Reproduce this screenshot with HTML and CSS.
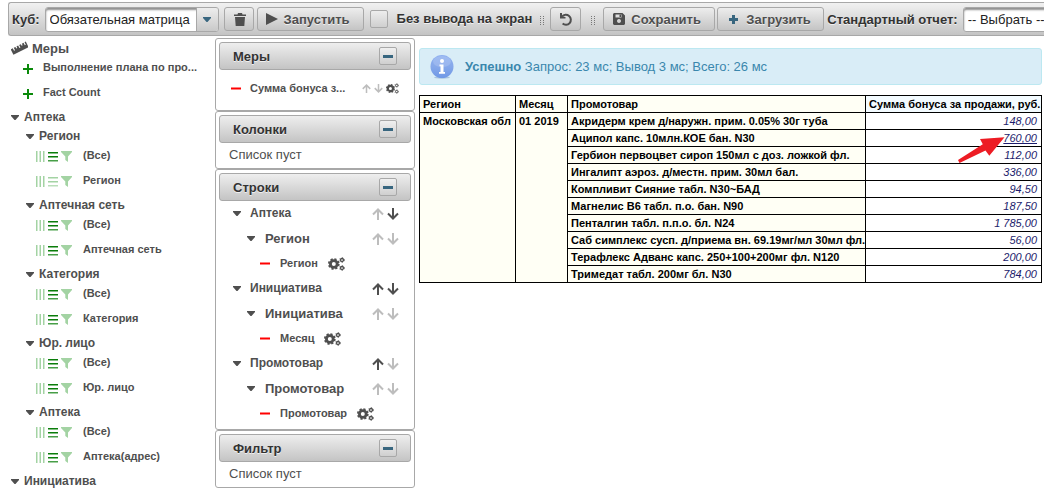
FILE: index.html
```html
<!DOCTYPE html>
<html lang="ru">
<head>
<meta charset="utf-8">
<title>Обязательная матрица</title>
<link rel="stylesheet" href="styles.css">
</head>
<body>
<svg class="sprite" aria-hidden="true">
  <symbol id="caret" viewBox="0 0 8 5"><path d="M0 0h8v1L4.500 5h-1L0 1z"/></symbol>
  <symbol id="cols" viewBox="0 0 9 11"><path d="M0 0h1.500v11H0zM3.500 0H5v11H3.500zM7 0h1.500v11H7z"/></symbol>
  <symbol id="rows" viewBox="0 0 10 10"><path d="M0 0h10v1.500H0zM0 4h10v1.500H0z"/><path opacity=".75" d="M0 8h10v1.500H0z"/></symbol>
  <symbol id="filter" viewBox="0 0 11 11"><path d="M0 0h11v1L7 5.500V11L4.300 9V5.500L0 1z"/></symbol>
  <symbol id="plus" viewBox="0 0 10 10"><path d="M4 0h2v4h4v2H6v4H4V6H0V4h4z"/></symbol>
  <symbol id="minus" viewBox="0 0 10 3"><path d="M0 .5h10v2H0z"/></symbol>
  <symbol id="up" viewBox="0 0 12 12"><path d="M6 12V2M1 6.500L6 1.500L11 6.500" fill="none" stroke="currentColor" stroke-width="2"/></symbol>
  <symbol id="down" viewBox="0 0 12 12"><path d="M6 0v10M1 5.500L6 10.500L11 5.500" fill="none" stroke="currentColor" stroke-width="2"/></symbol>
  <symbol id="cogs" viewBox="0 0 17 14">
    <g fill="none" stroke="currentColor">
      <circle cx="5.800" cy="7" r="3.400" stroke-width="2.800"/>
      <circle cx="5.800" cy="7" r="5" stroke-width="1.700" stroke-dasharray="2.200 1.727"/>
      <circle cx="14" cy="3" r="1.500" stroke-width="1.300"/>
      <circle cx="14" cy="3" r="2.400" stroke-width=".8" stroke-dasharray="1.200 1.313"/>
      <circle cx="14" cy="11" r="1.500" stroke-width="1.300"/>
      <circle cx="14" cy="11" r="2.400" stroke-width=".8" stroke-dasharray="1.200 1.313"/>
    </g>
  </symbol>
</svg>

<header class="toolbar">
  <label class="toolbar-label" for="cube">Куб:</label>
  <span class="select">
    <select id="cube"><option>Обязательная матрица</option></select>
    <span class="select-trigger"><svg class="i-caret"><use href="#caret"/></svg></span>
  </span>
  <button class="btn btn-trash" aria-label="Удалить">
    <svg width="12" height="13" viewBox="0 0 12 13"><path d="M0 1.500h3.500L4 0h4l.5 1.500H12V3H0zM1 4h10l-.7 9H1.700z"/></svg>
  </button>
  <button class="btn btn-run">
    <svg width="12" height="12" viewBox="0 0 12 12"><path d="M0 0L12 6L0 12z"/></svg>Запустить
  </button>
  <input class="check" type="checkbox" id="silent">
  <label class="toolbar-label check-label" for="silent">Без вывода на экран</label>
  <span class="grip"></span>
  <button class="btn btn-undo" aria-label="Отменить">
    <svg width="14" height="13" viewBox="0 0 14 13"><path d="M3 3.600A5 5 0 1 1 3.600 10.600" fill="none" stroke="currentColor" stroke-width="2"/><path d="M1 0v5.500h5.500V4L3 3.500V0z"/></svg>
  </button>
  <span class="grip"></span>
  <button class="btn btn-save">
    <svg width="12" height="12" viewBox="0 0 12 12"><path fill-rule="evenodd" d="M1 0h8.500L12 2.500V11l-1 1H1l-1-1V1zM2.500 1.500v3h6v-3zM6 6a2 2 0 1 0 .01 0z"/><path d="M6.500 1.500h1.500v2.500H6.500z"/></svg>Сохранить
  </button>
  <button class="btn btn-load">
    <svg class="blue" width="9" height="9" viewBox="0 0 9 9"><path d="M3 0h3v3h3v3H6v3H3V6H0V3h3z"/></svg>Загрузить
  </button>
  <label class="toolbar-label" for="report">Стандартный отчет:</label>
  <span class="select select-report">
    <select id="report"><option>-- Выбрать --</option></select>
    <span class="select-trigger"><svg class="i-caret"><use href="#caret"/></svg></span>
  </span>
</header>

<main class="layout">
  <nav class="tree" aria-label="Поля куба">
    <div class="tree-title">
      <svg width="17" height="14" viewBox="0 0 18 14"><g transform="rotate(-27 9 7)"><path d="M0 4h2.500v3h1.200V4h2v2h1.200V4h2v3h1.200V4h2v2h1.200V4h2v3h1.200V4H18v6.500H0z"/></g></svg>Меры
    </div>
    <div class="leaf measure"><button class="ico add" aria-label="Добавить"><svg class="i-plus"><use href="#plus"/></svg></button><span>Выполнение плана по про...</span></div>
    <div class="leaf measure"><button class="ico add" aria-label="Добавить"><svg class="i-plus"><use href="#plus"/></svg></button><span>Fact Count</span></div>

    <div class="node"><button class="ico" aria-label="Свернуть"><svg class="i-caret"><use href="#caret"/></svg></button>Аптека</div>
    <div class="branch">
      <div class="node"><button class="ico" aria-label="Свернуть"><svg class="i-caret"><use href="#caret"/></svg></button>Регион</div>
      <div class="leaf"><span class="axes"><button class="ico" aria-label="В колонки"><svg class="i-cols"><use href="#cols"/></svg></button><button class="ico on" aria-label="В строки"><svg class="i-rows"><use href="#rows"/></svg></button><button class="ico" aria-label="В фильтр"><svg class="i-filter"><use href="#filter"/></svg></button></span>(Все)</div>
      <div class="leaf"><span class="axes"><button class="ico" aria-label="В колонки"><svg class="i-cols"><use href="#cols"/></svg></button><button class="ico" aria-label="В строки"><svg class="i-rows"><use href="#rows"/></svg></button><button class="ico" aria-label="В фильтр"><svg class="i-filter"><use href="#filter"/></svg></button></span>Регион</div>

      <div class="node"><button class="ico" aria-label="Свернуть"><svg class="i-caret"><use href="#caret"/></svg></button>Аптечная сеть</div>
      <div class="leaf"><span class="axes"><button class="ico" aria-label="В колонки"><svg class="i-cols"><use href="#cols"/></svg></button><button class="ico on" aria-label="В строки"><svg class="i-rows"><use href="#rows"/></svg></button><button class="ico" aria-label="В фильтр"><svg class="i-filter"><use href="#filter"/></svg></button></span>(Все)</div>
      <div class="leaf"><span class="axes"><button class="ico" aria-label="В колонки"><svg class="i-cols"><use href="#cols"/></svg></button><button class="ico on" aria-label="В строки"><svg class="i-rows"><use href="#rows"/></svg></button><button class="ico" aria-label="В фильтр"><svg class="i-filter"><use href="#filter"/></svg></button></span>Аптечная сеть</div>

      <div class="node"><button class="ico" aria-label="Свернуть"><svg class="i-caret"><use href="#caret"/></svg></button>Категория</div>
      <div class="leaf"><span class="axes"><button class="ico" aria-label="В колонки"><svg class="i-cols"><use href="#cols"/></svg></button><button class="ico on" aria-label="В строки"><svg class="i-rows"><use href="#rows"/></svg></button><button class="ico" aria-label="В фильтр"><svg class="i-filter"><use href="#filter"/></svg></button></span>(Все)</div>
      <div class="leaf"><span class="axes"><button class="ico" aria-label="В колонки"><svg class="i-cols"><use href="#cols"/></svg></button><button class="ico on" aria-label="В строки"><svg class="i-rows"><use href="#rows"/></svg></button><button class="ico" aria-label="В фильтр"><svg class="i-filter"><use href="#filter"/></svg></button></span>Категория</div>

      <div class="node"><button class="ico" aria-label="Свернуть"><svg class="i-caret"><use href="#caret"/></svg></button>Юр. лицо</div>
      <div class="leaf"><span class="axes"><button class="ico" aria-label="В колонки"><svg class="i-cols"><use href="#cols"/></svg></button><button class="ico on" aria-label="В строки"><svg class="i-rows"><use href="#rows"/></svg></button><button class="ico" aria-label="В фильтр"><svg class="i-filter"><use href="#filter"/></svg></button></span>(Все)</div>
      <div class="leaf"><span class="axes"><button class="ico" aria-label="В колонки"><svg class="i-cols"><use href="#cols"/></svg></button><button class="ico on" aria-label="В строки"><svg class="i-rows"><use href="#rows"/></svg></button><button class="ico" aria-label="В фильтр"><svg class="i-filter"><use href="#filter"/></svg></button></span>Юр. лицо</div>

      <div class="node"><button class="ico" aria-label="Свернуть"><svg class="i-caret"><use href="#caret"/></svg></button>Аптека</div>
      <div class="leaf"><span class="axes"><button class="ico" aria-label="В колонки"><svg class="i-cols"><use href="#cols"/></svg></button><button class="ico on" aria-label="В строки"><svg class="i-rows"><use href="#rows"/></svg></button><button class="ico" aria-label="В фильтр"><svg class="i-filter"><use href="#filter"/></svg></button></span>(Все)</div>
      <div class="leaf"><span class="axes"><button class="ico" aria-label="В колонки"><svg class="i-cols"><use href="#cols"/></svg></button><button class="ico on" aria-label="В строки"><svg class="i-rows"><use href="#rows"/></svg></button><button class="ico" aria-label="В фильтр"><svg class="i-filter"><use href="#filter"/></svg></button></span>Аптека(адрес)</div>
    </div>
    <div class="node"><button class="ico" aria-label="Свернуть"><svg class="i-caret"><use href="#caret"/></svg></button>Инициатива</div>
  </nav>

  <div class="panels">
    <section class="panel">
      <h2 class="panel-head">Меры<button class="toggle" aria-label="Свернуть"></button></h2>
      <div class="item item-measure"><button class="ico del" aria-label="Убрать"><svg class="i-minus"><use href="#minus"/></svg></button><span class="item-text">Сумма бонуса з...</span>
        <span class="tools"><button class="ico off" aria-label="Выше"><svg class="i-arrow"><use href="#up"/></svg></button><button class="ico off" aria-label="Ниже"><svg class="i-arrow"><use href="#down"/></svg></button><button class="ico" aria-label="Настроить"><svg class="i-cogs"><use href="#cogs"/></svg></button></span></div>
    </section>

    <section class="panel">
      <h2 class="panel-head">Колонки<button class="toggle" aria-label="Свернуть"></button></h2>
      <p class="empty">Список пуст</p>
    </section>

    <section class="panel">
      <h2 class="panel-head">Строки<button class="toggle" aria-label="Свернуть"></button></h2>
      <div class="item item-dim"><button class="ico" aria-label="Свернуть"><svg class="i-caret"><use href="#caret"/></svg></button>Аптека
        <span class="tools"><button class="ico off" aria-label="Выше"><svg class="i-arrow"><use href="#up"/></svg></button><button class="ico" aria-label="Ниже"><svg class="i-arrow"><use href="#down"/></svg></button></span></div>
      <div class="item item-hier"><button class="ico" aria-label="Свернуть"><svg class="i-caret"><use href="#caret"/></svg></button>Регион
        <span class="tools"><button class="ico off" aria-label="Выше"><svg class="i-arrow"><use href="#up"/></svg></button><button class="ico off" aria-label="Ниже"><svg class="i-arrow"><use href="#down"/></svg></button></span></div>
      <div class="item item-level"><button class="ico del" aria-label="Убрать"><svg class="i-minus"><use href="#minus"/></svg></button>Регион<button class="ico" aria-label="Настроить"><svg class="i-cogs"><use href="#cogs"/></svg></button></div>

      <div class="item item-dim"><button class="ico" aria-label="Свернуть"><svg class="i-caret"><use href="#caret"/></svg></button>Инициатива
        <span class="tools"><button class="ico" aria-label="Выше"><svg class="i-arrow"><use href="#up"/></svg></button><button class="ico" aria-label="Ниже"><svg class="i-arrow"><use href="#down"/></svg></button></span></div>
      <div class="item item-hier"><button class="ico" aria-label="Свернуть"><svg class="i-caret"><use href="#caret"/></svg></button>Инициатива
        <span class="tools"><button class="ico off" aria-label="Выше"><svg class="i-arrow"><use href="#up"/></svg></button><button class="ico off" aria-label="Ниже"><svg class="i-arrow"><use href="#down"/></svg></button></span></div>
      <div class="item item-level"><button class="ico del" aria-label="Убрать"><svg class="i-minus"><use href="#minus"/></svg></button>Месяц<button class="ico" aria-label="Настроить"><svg class="i-cogs"><use href="#cogs"/></svg></button></div>

      <div class="item item-dim"><button class="ico" aria-label="Свернуть"><svg class="i-caret"><use href="#caret"/></svg></button>Промотовар
        <span class="tools"><button class="ico" aria-label="Выше"><svg class="i-arrow"><use href="#up"/></svg></button><button class="ico off" aria-label="Ниже"><svg class="i-arrow"><use href="#down"/></svg></button></span></div>
      <div class="item item-hier"><button class="ico" aria-label="Свернуть"><svg class="i-caret"><use href="#caret"/></svg></button>Промотовар
        <span class="tools"><button class="ico off" aria-label="Выше"><svg class="i-arrow"><use href="#up"/></svg></button><button class="ico off" aria-label="Ниже"><svg class="i-arrow"><use href="#down"/></svg></button></span></div>
      <div class="item item-level"><button class="ico del" aria-label="Убрать"><svg class="i-minus"><use href="#minus"/></svg></button>Промотовар<button class="ico" aria-label="Настроить"><svg class="i-cogs"><use href="#cogs"/></svg></button></div>
    </section>

    <section class="panel">
      <h2 class="panel-head">Фильтр<button class="toggle" aria-label="Свернуть"></button></h2>
      <p class="empty">Список пуст</p>
    </section>
  </div>

  <section class="result">
    <div class="message" role="status">
      <svg width="24" height="24" viewBox="0 0 24 24">
        <defs><linearGradient id="ball" x1="0" y1="0" x2="0" y2="1"><stop offset="0" stop-color="#8fb0f0"/><stop offset=".5" stop-color="#86a8ea"/><stop offset="1" stop-color="#6f98e6"/></linearGradient></defs>
        <ellipse cx="12" cy="22.500" rx="8" ry="1.200" fill="#a9c3dd"/>
        <circle cx="12" cy="11.500" r="11.500" fill="url(#ball)"/>
        <ellipse cx="12" cy="6.500" rx="9" ry="5.500" fill="#fff" opacity=".16"/>
        <circle cx="12" cy="6" r="2" fill="#fff"/>
        <path d="M9.500 9.500h4v7.500h1.500v1.800H9V17h1.500v-5.700h-1z" fill="#fff"/>
      </svg>
      <p><b>Успешно</b> Запрос: 23 мс; Вывод 3 мс; Всего: 26 мс</p>
    </div>

    <table class="pivot">
      <colgroup><col class="c-region"><col class="c-month"><col class="c-item"><col></colgroup>
      <thead>
        <tr><th>Регион</th><th>Месяц</th><th>Промотовар</th><th class="sum">Сумма бонуса за продажи, руб.</th></tr>
      </thead>
      <tbody>
        <tr><th rowspan="10">Московская обл</th><th rowspan="10">01 2019</th><th>Акридерм крем д/наружн. прим. 0.05% 30г туба</th><td>148,00</td></tr>
        <tr><th>Аципол капс. 10млн.КОЕ бан. N30</th><td class="marked"><a href="#detail">760,00</a><svg class="pointer" width="48" height="28" viewBox="0 0 48 28"><path d="M47.500 1.300L23 3l2.800 5.300L1 24l1.500 3L28.500 14.500l3.800 5.200z"/></svg></td></tr>
        <tr><th>Гербион первоцвет сироп 150мл с доз. ложкой фл.</th><td>112,00</td></tr>
        <tr><th>Ингалипт аэроз. д/местн. прим. 30мл бал.</th><td>336,00</td></tr>
        <tr><th>Компливит Сияние табл. N30~БАД</th><td>94,50</td></tr>
        <tr><th>Магнелис В6 табл. п.о. бан. N90</th><td>187,50</td></tr>
        <tr><th>Пенталгин табл. п.п.о. бл. N24</th><td>1 785,00</td></tr>
        <tr><th>Саб симплекс сусп. д/приема вн. 69.19мг/мл 30мл фл.</th><td>56,00</td></tr>
        <tr><th>Терафлекс Адванс капс. 250+100+200мг фл. N120</th><td>200,00</td></tr>
        <tr><th>Тримедат табл. 200мг бл. N30</th><td>784,00</td></tr>
      </tbody>
    </table>
  </section>
</main>
</body>
</html>
```
FILE: styles.css
```css
* { box-sizing: border-box; }

body {
  margin: 0;
  padding: 2px 0 0 8px;
  overflow: hidden;
  background: #fff;
  color: #4f4f4f;
  font: 13px/19px "Liberation Sans", Arial, sans-serif;
}

svg { flex: none; display: block; fill: currentColor; }
.sprite { position: absolute; width: 0; height: 0; }

button { font: inherit; color: inherit; }

.ico {
  display: flex;
  align-items: center;
  padding: 0;
  border: 0;
  background: none;
}

.i-caret { width: 8px; height: 5px; }
.i-cols { width: 9px; height: 11px; }
.i-rows { width: 10px; height: 10px; }
.i-filter { width: 11px; height: 11px; }
.i-plus { width: 10px; height: 10px; }
.i-minus { width: 10px; height: 3px; }
.i-arrow { width: 12px; height: 12px; }
.i-cogs { width: 17px; height: 14px; }

/* Toolbar */
.toolbar {
  display: flex;
  align-items: center;
  height: 34px;
  padding: 0 3px;
  overflow: hidden;
  border: 1px solid #a8a8a8;
  border-right: 0;
  border-radius: 3px 0 0 3px;
  background: linear-gradient(#f1f1f1, #c4c4c4);
  font-weight: bold;
  white-space: nowrap;
  text-shadow: 0 1px 0 rgba(255, 255, 255, 0.7);
}

.toolbar > * { flex: none; }
.toolbar-label { color: #333; }

.select {
  display: flex;
  width: 174px;
  height: 25px;
  margin: 0 5px;
  border: 1px solid #a8a8a8;
  border-radius: 3px;
  background: #fff;
  box-shadow: inset 0 2px 2px #8f8f8f;
}

.select select {
  flex: 1;
  min-width: 0;
  padding: 0 4px;
  border: 0;
  background: none;
  color: #222;
  font: inherit;
  font-weight: normal;
  appearance: none;
}

.select-trigger {
  display: flex;
  align-items: center;
  justify-content: center;
  width: 22px;
  border-left: 1px solid #a8a8a8;
  border-radius: 0 2px 2px 0;
  background: linear-gradient(#ededed, #c9c9c9);
  color: #38667f;
}

.btn {
  display: flex;
  align-items: center;
  gap: 6px;
  height: 24px;
  margin-right: 3px;
  padding: 0 12px 0 8px;
  border: 1px solid #a8a8a8;
  border-radius: 3px;
  background: linear-gradient(#ededed, #c4c4c4);
  text-shadow: inherit;
}

.btn-trash { width: 30px; padding: 0 0 0 9px; }
.btn-run { width: 107px; margin-right: 6px; }
.btn-undo { width: 31px; margin: 0 10px 0 6px; padding: 0 0 0 8px; }
.btn-save { width: 112px; margin-left: 8px; margin-right: 2px; padding-left: 9px; }
.btn-load { width: 107px; gap: 8px; padding-left: 11px; }
.blue { color: #38667f; }

.check {
  width: 18px;
  height: 18px;
  margin: 0 9px 0 0;
  border: 1px solid #a8a8a8;
  border-radius: 2px;
  background: linear-gradient(#ededed, #cfcfcf);
  appearance: none;
}

.check:checked { background: #38667f; }
.check-label { margin-right: 8px; padding-bottom: 2px; }

.grip {
  width: 4px;
  height: 10px;
  margin-top: 4px;
  background: repeating-linear-gradient(#777 0 1px, transparent 1px 2px);
  mask: linear-gradient(90deg, #000 1px, transparent 1px 3px, #000 3px);
}

/* Page columns */
.layout {
  display: grid;
  grid-template-columns: 207px 200px minmax(0, 1fr);
  padding: 2px 2px 0 0;
}

/* Field tree */
.tree { font-weight: bold; font-size: 12px; white-space: nowrap; }

.tree-title {
  display: flex;
  align-items: center;
  gap: 4px;
  height: 20px;
  padding-left: 3px;
  font-size: 13px;
}

.node {
  display: flex;
  align-items: center;
  gap: 5px;
  height: 19px;
  padding-left: 3px;
}

.branch { padding-left: 15px; }

.leaf {
  display: flex;
  height: 25px;
  padding-left: 13px;
  font-size: 11px;
}

.axes {
  display: flex;
  align-items: center;
  gap: 3px;
  width: 47px;
  height: 21px;
  color: #a3d3a3;
}

.axes .on { color: #0a7d0a; }
.measure { gap: 10px; padding-left: 15px; }
.add { height: 22px; color: #0a8a0a; }

/* Axis panels */
.panel {
  padding: 3px;
  border: 1px solid #a8a8a8;
  border-radius: 3px;
}

.panel-head {
  display: flex;
  align-items: center;
  justify-content: space-between;
  height: 28px;
  margin: 0;
  padding: 0 13px;
  border: 1px solid #a8a8a8;
  border-radius: 3px;
  background: linear-gradient(#eee, #c4c4c4);
  color: #333;
  font-size: 13px;
  text-shadow: 0 1px 0 rgba(255, 255, 255, 0.7);
}

.toggle {
  display: flex;
  align-items: center;
  justify-content: center;
  width: 18px;
  height: 18px;
  padding: 0;
  border: 1px solid #a8a8a8;
  border-radius: 2px;
  background: linear-gradient(#f0f0f0, #cfcfcf);
}

.toggle::before {
  content: "";
  width: 10px;
  height: 3px;
  background: #38667f;
}

.empty { margin: 0; padding: 2px 10px 1px; }

.item {
  display: flex;
  align-items: center;
  height: 25px;
  padding-right: 12px;
  font-weight: bold;
  white-space: nowrap;
}

.item-measure { gap: 9px; height: 37px; padding-left: 12px; font-size: 11px; }
.item-dim { gap: 9px; padding-left: 14px; font-size: 12px; }
.item-hier { gap: 10px; padding-left: 28px; }
.item-level { gap: 10px; padding-left: 41px; font-size: 11px; }

.tools { display: flex; gap: 3px; margin-left: auto; }
.item-measure .i-arrow { width: 9px; height: 9px; }
.item-measure .i-cogs { width: 13px; height: 11px; }
.off { color: #bdbdbd; }
.del { color: #f00; }

/* Query result */
.result { padding: 10px 0 0 4px; }

.message {
  display: flex;
  align-items: center;
  gap: 11px;
  min-height: 37px;
  margin-bottom: 10px;
  padding: 0 10px;
  border: 1px solid #bce8f1;
  border-radius: 3px;
  background: #d9edf7;
  color: #3a87ad;
}

.message p { margin: 0; }

.pivot {
  width: 100%;
  border-collapse: collapse;
  table-layout: fixed;
  color: #000;
  font-size: 11px;
  line-height: 14px;
  white-space: nowrap;
}

.c-region { width: 96px; }
.c-month { width: 52px; }
.c-item { width: 298px; }

.pivot th,
.pivot td {
  padding: 1px 4px;
  border: 1px solid #000;
  text-align: left;
  vertical-align: top;
}

.pivot th {
  padding: 1px 1px 1px 3px;
  background: #fffff5;
}

.pivot .sum { background: #f3fbff; }

.pivot td {
  color: #1c1c6c;
  font-style: italic;
  text-align: right;
}

.pivot a { color: inherit; }
.marked { position: relative; }

.pointer {
  position: absolute;
  top: 6px;
  right: 36px;
  fill: #ed1c24;
}
```
